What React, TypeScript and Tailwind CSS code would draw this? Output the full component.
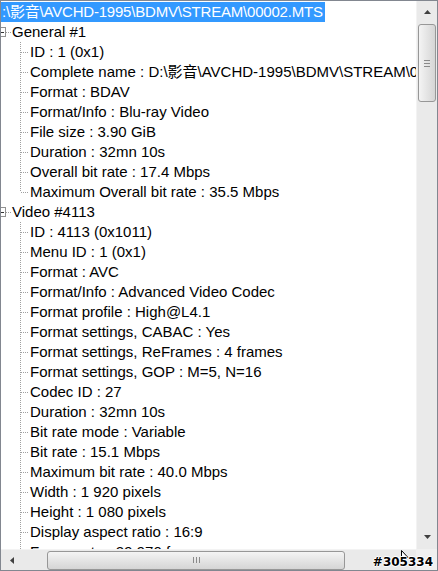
import React from "react";

// One line of the MediaInfo tree view
interface Row {
  text: string;
  level: 0 | 1;
  last?: boolean;
}

const rows: Row[] = [
  { text: "General #1", level: 0 },
  { text: "ID : 1 (0x1)", level: 1 },
  { text: "Complete name : D:\\影音\\AVCHD-1995\\BDMV\\STREAM\\00002.MTS", level: 1 },
  { text: "Format : BDAV", level: 1 },
  { text: "Format/Info : Blu-ray Video", level: 1 },
  { text: "File size : 3.90 GiB", level: 1 },
  { text: "Duration : 32mn 10s", level: 1 },
  { text: "Overall bit rate : 17.4 Mbps", level: 1 },
  { text: "Maximum Overall bit rate : 35.5 Mbps", level: 1, last: true },
  { text: "Video #4113", level: 0 },
  { text: "ID : 4113 (0x1011)", level: 1 },
  { text: "Menu ID : 1 (0x1)", level: 1 },
  { text: "Format : AVC", level: 1 },
  { text: "Format/Info : Advanced Video Codec", level: 1 },
  { text: "Format profile : High@L4.1", level: 1 },
  { text: "Format settings, CABAC : Yes", level: 1 },
  { text: "Format settings, ReFrames : 4 frames", level: 1 },
  { text: "Format settings, GOP : M=5, N=16", level: 1 },
  { text: "Codec ID : 27", level: 1 },
  { text: "Duration : 32mn 10s", level: 1 },
  { text: "Bit rate mode : Variable", level: 1 },
  { text: "Bit rate : 15.1 Mbps", level: 1 },
  { text: "Maximum bit rate : 40.0 Mbps", level: 1 },
  { text: "Width : 1 920 pixels", level: 1 },
  { text: "Height : 1 080 pixels", level: 1 },
  { text: "Display aspect ratio : 16:9", level: 1 },
  { text: "Frame rate : 29.970 fps", level: 1 },
];

const font = "font-['Liberation_Sans','Noto_Sans_CJK_SC',sans-serif]";

// Dotted connector in front of a child item
const ChildLine = ({ last }: { last?: boolean }) => (
  <svg width="10" height="20" className="shrink-0">
    <line x1="0.5" y1="0" x2="0.5" y2={last ? 10 : 20} stroke="#a0a0a0" strokeDasharray="1 1" />
    <line x1="1" y1="10.5" x2="9" y2="10.5" stroke="#a0a0a0" strokeDasharray="1 1" />
  </svg>
);

// Expand box, mostly scrolled out of view on the left
const RootBox = () => (
  <svg width="10" height="20" className="shrink-0">
    <rect x="-4.5" y="5.5" width="9" height="9" fill="#fff" stroke="#919191" />
    <line x1="-2" y1="10.5" x2="3" y2="10.5" stroke="#333" />
    <line x1="5" y1="10.5" x2="10" y2="10.5" stroke="#a0a0a0" strokeDasharray="1 1" />
  </svg>
);

const App: React.FC = () => {
  return (
    <div className={`w-[438px] h-[571px] border border-[#828790] bg-white flex flex-col overflow-hidden relative ${font}`}>
      <div className="flex h-[548px]">
        {/* Tree */}
        <div className="flex-1 overflow-hidden pt-[1px] text-[15px] text-black">
          <div className="h-5 flex items-center whitespace-nowrap">
            <span className="bg-[#3399ff] text-white h-5 leading-5 pl-[1px] pr-[2px] tracking-[-0.2px]">
              :\影音\AVCHD-1995\BDMV\STREAM\00002.MTS
            </span>
          </div>
          {rows.map((r, i) => (
            <div key={i} className="h-5 flex items-center whitespace-nowrap">
              {r.level === 0 ? (
                <>
                  <RootBox />
                  <span className="ml-[1px]">{r.text}</span>
                </>
              ) : (
                <>
                  <span className="w-[19px] shrink-0" />
                  <ChildLine last={r.last} />
                  <span>{r.text}</span>
                </>
              )}
            </div>
          ))}
        </div>

        {/* Vertical scrollbar */}
        <div className="w-[21px] bg-[#eaeaea] border-l border-[#f3f3f3] flex flex-col items-center">
          <div className="h-[22px] w-full flex items-center justify-center">
            <svg width="7" height="4"><path d="M0 4 L3.5 0 L7 4 Z" fill="#404040" /></svg>
          </div>
          <div className="mt-[1px] h-[78px] w-[18px] rounded-[3px] border border-[#979797] bg-gradient-to-r from-[#f4f4f4] to-[#d5d5d5] flex flex-col items-center justify-center gap-[2px]">
            <div className="w-[6px] h-px bg-[#8a8a8a]" />
            <div className="w-[6px] h-px bg-[#8a8a8a]" />
            <div className="w-[6px] h-px bg-[#8a8a8a]" />
          </div>
          <div className="flex-1" />
          <div className="h-[24px] w-full flex items-center justify-center">
            <svg width="7" height="4"><path d="M0 0 L7 0 L3.5 4 Z" fill="#404040" /></svg>
          </div>
        </div>
      </div>

      {/* Horizontal scrollbar */}
      <div className="flex h-[21px]">
        <div className="flex-1 bg-[#eaeaea] border-t border-[#f3f3f3] flex items-center">
          <div className="w-[22px] h-full flex items-center justify-center">
            <svg width="4" height="7"><path d="M4 0 L0 3.5 L4 7 Z" fill="#404040" /></svg>
          </div>
          <div className="ml-[24px] w-[298px] h-[19px] rounded-[3px] border border-[#979797] bg-gradient-to-b from-[#f4f4f4] to-[#d5d5d5] flex items-center justify-center gap-[2px]">
            <div className="h-[6px] w-px bg-[#8a8a8a]" />
            <div className="h-[6px] w-px bg-[#8a8a8a]" />
            <div className="h-[6px] w-px bg-[#8a8a8a]" />
          </div>
        </div>
        <div className="w-[21px] bg-[#f0f0f0]" />
      </div>

      {/* Stamp and cursor over the corner */}
      <svg width="8" height="12" className="absolute left-[400px] top-[549px]">
        <path d="M0.5 0.5 L0.5 10 L3 7.5 L7 7.5 Z" fill="#fff" stroke="#000" strokeWidth="1" />
      </svg>
      <span className="absolute right-[4px] bottom-[2px] text-[12px] leading-none font-bold text-black font-['DejaVu_Sans',sans-serif] [text-shadow:-1px_0_#fff,1px_0_#fff,0_-1px_#fff,0_1px_#fff]">
        #305334
      </span>
    </div>
  );
};

export default App;
